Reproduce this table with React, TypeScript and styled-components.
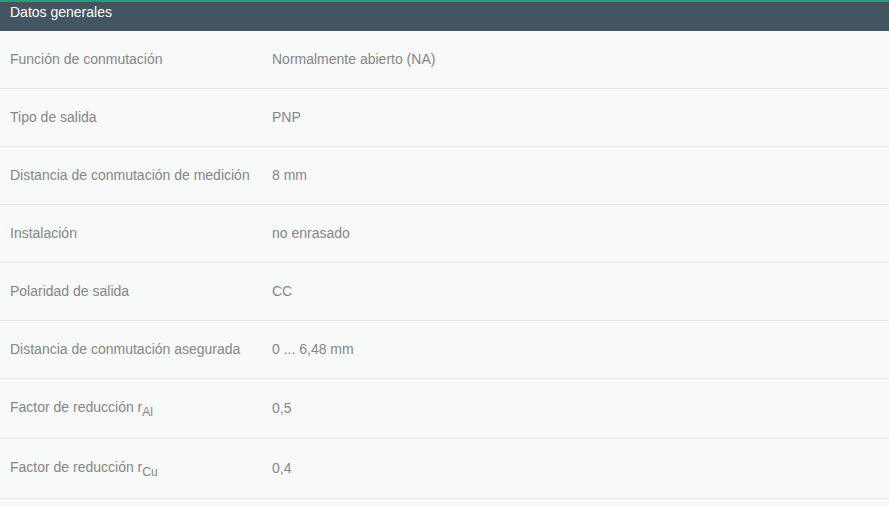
import React from "react";
import styled, { createGlobalStyle } from "styled-components";

const GlobalStyle = createGlobalStyle`
  html, body {
    margin: 0;
    padding: 0;
    background: #f8f9f9;
  }
  body {
    font-family: Arial, "Liberation Sans", sans-serif;
  }
`;

const Panel = styled.div`
  width: 889px;
  background: #f8f9f9;
  border-top: 2px solid #19a47c;
`;

const Header = styled.div`
  background: #435560;
  color: #ffffff;
  font-size: 14px;
  line-height: 17px;
  padding: 2px 10px 10px;
`;

const Row = styled.div`
  display: flex;
  align-items: center;
  border-bottom: 1px solid #e3e6e6;
  padding: 20px 10px;
  font-size: 14px;
  line-height: 17px;
  color: #868686;
`;

const Label = styled.div`
  width: 262px;
  flex-shrink: 0;
`;

const Value = styled.div`
  flex: 1;
`;

const Sub = styled.sub`
  font-size: 12px;
  line-height: 12px;
  vertical-align: -4px;
`;

type Item = { label: React.ReactNode; value: string };

const items: Item[] = [
  { label: "Función de conmutación", value: "Normalmente abierto (NA)" },
  { label: "Tipo de salida", value: "PNP" },
  { label: "Distancia de conmutación de medición", value: "8 mm" },
  { label: "Instalación", value: "no enrasado" },
  { label: "Polaridad de salida", value: "CC" },
  { label: "Distancia de conmutación asegurada", value: "0 ... 6,48 mm" },
  {
    label: (
      <>
        Factor de reducción r<Sub>Al</Sub>
      </>
    ),
    value: "0,5",
  },
  {
    label: (
      <>
        Factor de reducción r<Sub>Cu</Sub>
      </>
    ),
    value: "0,4",
  },
];

const App: React.FC = () => {
  return (
    <>
      <GlobalStyle />
      <Panel>
        <Header>Datos generales</Header>
        {items.map((item, i) => (
          <Row key={i}>
            <Label>{item.label}</Label>
            <Value>{item.value}</Value>
          </Row>
        ))}
      </Panel>
    </>
  );
};

export default App;
